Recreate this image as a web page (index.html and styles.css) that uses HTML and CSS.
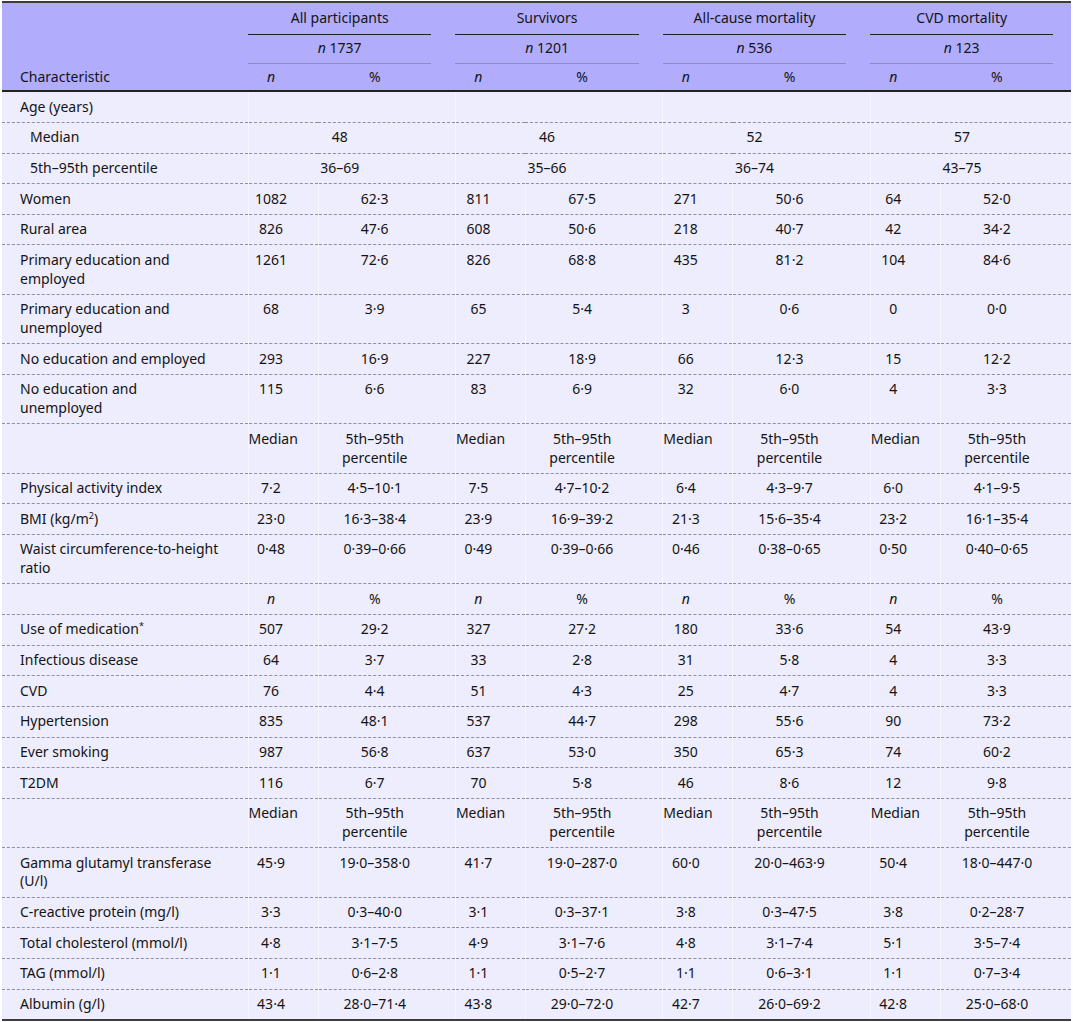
FILE: index.html
```html
<!DOCTYPE html>
<html lang="en">
<head>
<meta charset="utf-8">
<title>Characteristics of participants</title>
<link rel="stylesheet" href="styles.css">
</head>
<body>
<table class="tbl">
  <colgroup>
    <col class="c-char">
    <col class="c-n"><col class="c-p">
    <col class="c-n"><col class="c-p">
    <col class="c-n"><col class="c-p">
    <col class="c-n"><col class="c-plast">
  </colgroup>
  <thead>
    <tr class="h1">
      <th class="lab"></th>
      <th colspan="2" class="grp"><div class="line1">All participants</div></th>
      <th colspan="2" class="grp"><div class="line1">Survivors</div></th>
      <th colspan="2" class="grp"><div class="line1">All-cause mortality</div></th>
      <th colspan="2" class="grp"><div class="line1">CVD mortality</div></th>
    </tr>
    <tr class="h2">
      <th class="lab"></th>
      <th colspan="2" class="grp"><div class="line2"><i>n</i> 1737</div></th>
      <th colspan="2" class="grp"><div class="line2"><i>n</i> 1201</div></th>
      <th colspan="2" class="grp"><div class="line2"><i>n</i> 536</div></th>
      <th colspan="2" class="grp"><div class="line2"><i>n</i> 123</div></th>
    </tr>
    <tr class="h3">
      <th class="lab">Characteristic</th>
      <th><i>n</i></th><th>%</th>
      <th><i>n</i></th><th>%</th>
      <th><i>n</i></th><th>%</th>
      <th><i>n</i></th><th>%</th>
    </tr>
  </thead>
  <tbody>
    <tr><td class="lab">Age (years)</td><td colspan="2"></td><td colspan="2"></td><td colspan="2"></td><td colspan="2"></td></tr>
    <tr><td class="lab ind">Median</td><td colspan="2">48</td><td colspan="2">46</td><td colspan="2">52</td><td colspan="2">57</td></tr>
    <tr><td class="lab ind">5th–95th percentile</td><td colspan="2">36–69</td><td colspan="2">35–66</td><td colspan="2">36–74</td><td colspan="2">43–75</td></tr>
    <tr><td class="lab">Women</td><td>1082</td><td>62·3</td><td>811</td><td>67·5</td><td>271</td><td>50·6</td><td>64</td><td>52·0</td></tr>
    <tr><td class="lab">Rural area</td><td>826</td><td>47·6</td><td>608</td><td>50·6</td><td>218</td><td>40·7</td><td>42</td><td>34·2</td></tr>
    <tr><td class="lab">Primary education and employed</td><td>1261</td><td>72·6</td><td>826</td><td>68·8</td><td>435</td><td>81·2</td><td>104</td><td>84·6</td></tr>
    <tr><td class="lab">Primary education and unemployed</td><td>68</td><td>3·9</td><td>65</td><td>5·4</td><td>3</td><td>0·6</td><td>0</td><td>0·0</td></tr>
    <tr><td class="lab">No education and employed</td><td>293</td><td>16·9</td><td>227</td><td>18·9</td><td>66</td><td>12·3</td><td>15</td><td>12·2</td></tr>
    <tr><td class="lab">No education and unemployed</td><td>115</td><td>6·6</td><td>83</td><td>6·9</td><td>32</td><td>6·0</td><td>4</td><td>3·3</td></tr>
    <tr><td class="lab"></td><td>Median</td><td>5th–95th percentile</td><td>Median</td><td>5th–95th percentile</td><td>Median</td><td>5th–95th percentile</td><td>Median</td><td>5th–95th percentile</td></tr>
    <tr><td class="lab">Physical activity index</td><td>7·2</td><td>4·5–10·1</td><td>7·5</td><td>4·7–10·2</td><td>6·4</td><td>4·3–9·7</td><td>6·0</td><td>4·1–9·5</td></tr>
    <tr><td class="lab">BMI (kg/m<sup>2</sup>)</td><td>23·0</td><td>16·3–38·4</td><td>23·9</td><td>16·9–39·2</td><td>21·3</td><td>15·6–35·4</td><td>23·2</td><td>16·1–35·4</td></tr>
    <tr><td class="lab">Waist circumference-to-height ratio</td><td>0·48</td><td>0·39–0·66</td><td>0·49</td><td>0·39–0·66</td><td>0·46</td><td>0·38–0·65</td><td>0·50</td><td>0·40–0·65</td></tr>
    <tr><td class="lab"></td><td><i>n</i></td><td>%</td><td><i>n</i></td><td>%</td><td><i>n</i></td><td>%</td><td><i>n</i></td><td>%</td></tr>
    <tr><td class="lab">Use of medication<sup>*</sup></td><td>507</td><td>29·2</td><td>327</td><td>27·2</td><td>180</td><td>33·6</td><td>54</td><td>43·9</td></tr>
    <tr><td class="lab">Infectious disease</td><td>64</td><td>3·7</td><td>33</td><td>2·8</td><td>31</td><td>5·8</td><td>4</td><td>3·3</td></tr>
    <tr><td class="lab">CVD</td><td>76</td><td>4·4</td><td>51</td><td>4·3</td><td>25</td><td>4·7</td><td>4</td><td>3·3</td></tr>
    <tr><td class="lab">Hypertension</td><td>835</td><td>48·1</td><td>537</td><td>44·7</td><td>298</td><td>55·6</td><td>90</td><td>73·2</td></tr>
    <tr><td class="lab">Ever smoking</td><td>987</td><td>56·8</td><td>637</td><td>53·0</td><td>350</td><td>65·3</td><td>74</td><td>60·2</td></tr>
    <tr><td class="lab">T2DM</td><td>116</td><td>6·7</td><td>70</td><td>5·8</td><td>46</td><td>8·6</td><td>12</td><td>9·8</td></tr>
    <tr><td class="lab"></td><td>Median</td><td>5th–95th percentile</td><td>Median</td><td>5th–95th percentile</td><td>Median</td><td>5th–95th percentile</td><td>Median</td><td>5th–95th percentile</td></tr>
    <tr><td class="lab">Gamma glutamyl transferase (U/l)</td><td>45·9</td><td>19·0–358·0</td><td>41·7</td><td>19·0–287·0</td><td>60·0</td><td>20·0–463·9</td><td>50·4</td><td>18·0–447·0</td></tr>
    <tr><td class="lab">C-reactive protein (mg/l)</td><td>3·3</td><td>0·3–40·0</td><td>3·1</td><td>0·3–37·1</td><td>3·8</td><td>0·3–47·5</td><td>3·8</td><td>0·2–28·7</td></tr>
    <tr><td class="lab">Total cholesterol (mmol/l)</td><td>4·8</td><td>3·1–7·5</td><td>4·9</td><td>3·1–7·6</td><td>4·8</td><td>3·1–7·4</td><td>5·1</td><td>3·5–7·4</td></tr>
    <tr><td class="lab">TAG (mmol/l)</td><td>1·1</td><td>0·6–2·8</td><td>1·1</td><td>0·5–2·7</td><td>1·1</td><td>0·6–3·1</td><td>1·1</td><td>0·7–3·4</td></tr>
    <tr><td class="lab">Albumin (g/l)</td><td>43·4</td><td>28·0–71·4</td><td>43·8</td><td>29·0–72·0</td><td>42·7</td><td>26·0–69·2</td><td>42·8</td><td>25·0–68·0</td></tr>
  </tbody>
</table>
</body>
</html>
```

FILE: styles.css
```css
body {
  margin: 0;
  background: #ffffff;
  font-family: "Noto Sans", "Open Sans", sans-serif;
  font-size: 14px;
  color: #141414;
}

.tbl {
  margin: 1px 0 0 2px;
  width: 1069px;
  border-collapse: collapse;
  table-layout: fixed;
  line-height: 18.75px;
  border-top: 2px solid #3c3c3c;
  border-bottom: 2px solid #3c3c3c;
}

.c-char { width: 246px; }
.c-n { width: 70px; }
.c-p { width: 137.4px; }
.c-plast { width: 131px; }

.tbl th {
  background: #b1adfc;
  font-weight: normal;
  text-align: center;
  padding: 0 24px 0 0;
  vertical-align: bottom;
}

.tbl th:last-child,
.tbl td:last-child {
  padding-right: 18px;
}

.line1 {
  border-bottom: 1px solid #222222;
  padding: 6px 0 6px;
}

.line2 {
  border-bottom: 1px solid #8e8cbc;
  padding: 4.5px 0 5px;
}

.h3 th {
  padding-top: 3.5px;
  padding-bottom: 4px;
  border-bottom: 2px solid #222222;
}

.tbl td {
  background: #eeedfd;
  text-align: center;
  vertical-align: top;
  padding: 5.5px 24px 5.4px 0;
  border-bottom: 1px dashed #8e8ea4;
  border-left: 1px solid rgba(255, 255, 255, 0.5);
}

.tbl tbody tr:last-child td {
  border-bottom: none;
}

.tbl .lab {
  text-align: left;
  padding-left: 18px;
  padding-right: 28px;
  border-left: none;
}

.tbl .ind {
  padding-left: 28px;
}

sup {
  font-size: 9px;
  line-height: 0;
  vertical-align: 5px;
}
```
